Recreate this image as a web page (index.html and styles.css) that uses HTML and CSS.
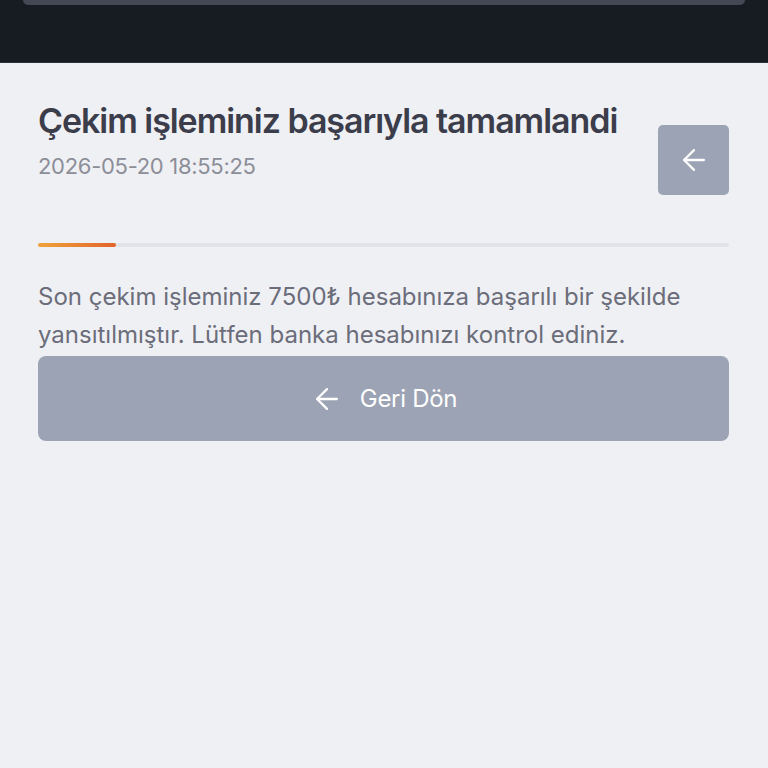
FILE: index.html
```html
<!DOCTYPE html>
<html lang="tr">
<head>
<meta charset="utf-8">
<link rel="stylesheet" href="styles.css">
</head>
<body>
<header class="topbar">
  <div class="topbar-field"></div>
</header>
<main class="content">
  <section class="head-row">
    <div class="head-text">
      <h1 class="title">Çekim işleminiz başarıyla tamamlandi</h1>
      <div class="date">2026-05-20 18:55:25</div>
    </div>
    <button class="icon-btn" aria-label="Geri">
      <svg class="arrow" viewBox="0 0 24 24" fill="none" stroke="#fff" stroke-width="1.6" stroke-linecap="round" stroke-linejoin="round"><path d="M19 12H5"/><path d="M12 19l-7-7 7-7"/></svg>
    </button>
  </section>
  <div class="progress"><div class="progress-fill" style="width: 78px"></div></div>
  <p class="message">Son çekim işleminiz 7500₺ hesabınıza başarılı bir şekilde yansıtılmıştır. Lütfen banka hesabınızı kontrol ediniz.</p>
  <button class="back-btn">
    <svg class="arrow" viewBox="0 0 24 24" fill="none" stroke="#fff" stroke-width="1.6" stroke-linecap="round" stroke-linejoin="round"><path d="M19 12H5"/><path d="M12 19l-7-7 7-7"/></svg>
    <span>Geri Dön</span>
  </button>
</main>
</body>
</html>
```
FILE: styles.css
```css
* { box-sizing: border-box; }
html, body { margin: 0; padding: 0; }
body {
  background: #eff0f4;
  font-family: Inter, "Noto Sans", sans-serif;
  width: 768px;
  height: 768px;
  overflow: hidden;
}
.topbar {
  height: 63px;
  background: #171c23;
  padding: 0 23px;
  border-bottom: 1px solid #2c323b;
}
.topbar-field {
  height: 5px;
  background: #434954;
  border-radius: 0 0 10px 10px;
}
.content {
  padding: 0 39px 0 38px;
}
.head-row {
  display: flex;
  justify-content: space-between;
  align-items: flex-start;
  padding-top: 36px;
}
.title {
  margin: 0;
  font-size: 34px;
  font-weight: 600;
  letter-spacing: -1.05px;
  color: #3b3d4b;
  line-height: 44px;
}
.date {
  margin-top: 8px;
  font-size: 22px;
  color: #8c8e98;
  letter-spacing: -0.3px;
  line-height: 30px;
}
.arrow {
  width: 34px;
  height: 34px;
  display: block;
}
.icon-btn {
  margin-top: 26px;
  width: 71px;
  height: 70px;
  border: none;
  border-radius: 5px;
  background: #9ca3b4;
  display: flex;
  align-items: center;
  justify-content: center;
  padding: 0;
}
.progress {
  margin-top: 48px;
  height: 4px;
  background: #e2e3e8;
  border-radius: 2px;
}
.progress-fill {
  height: 4px;
  border-radius: 2px;
  background: linear-gradient(90deg, #eea33a, #e3632a);
}
.message {
  margin: 31px 0 0;
  font-size: 24px;
  line-height: 38px;
  color: #6b6d7a;
  letter-spacing: 0;
}
.back-btn {
  margin-top: 2px;
  width: 100%;
  height: 85px;
  border: none;
  border-radius: 8px;
  background: #9ca3b4;
  display: flex;
  align-items: center;
  justify-content: center;
  gap: 16px;
  color: #fff;
  font-family: Inter, "Noto Sans", sans-serif;
  font-size: 24px;
  letter-spacing: -0.3px;
  padding: 0;
}
```
